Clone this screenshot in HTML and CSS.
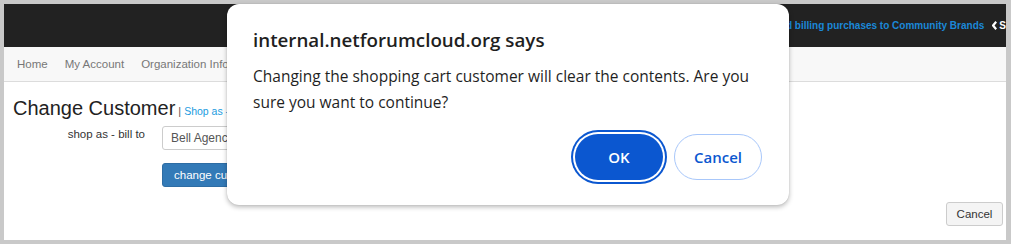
FILE: index.html
```html
<!DOCTYPE html>
<html lang="en">
<head>
<meta charset="utf-8">
<title>Change Customer</title>
<link rel="stylesheet" href="styles.css">
</head>
<body>
<div class="frame">
  <header class="topbar">
    <div class="topbar-links">
      <a class="billing-link" href="#">Send billing purchases to Community Brands</a>
      <svg class="chevron" width="5" height="9" viewBox="0 0 5 9" aria-hidden="true"><path d="M4.2 0.8 L1.1 4.5 L4.2 8.2" fill="none" stroke="#fff" stroke-width="2.2"/></svg>
      <span class="signout">Sign Out</span>
    </div>
  </header>
  <nav class="navbar">
    <a class="nav-item" href="#">Home</a>
    <a class="nav-item" href="#">My Account</a>
    <a class="nav-item" href="#">Organization Info</a>
  </nav>
  <main class="content">
    <h1 class="page-title">Change Customer<span class="title-sep">|</span><a class="title-link" href="#">Shop as - bill to</a></h1>
    <div class="form-row first-row">
      <label class="form-label">shop as - bill to</label>
      <div class="select-box">Bell Agency</div>
    </div>
    <div class="form-row">
      <span class="form-label"></span>
      <button class="btn-primary" type="button">change customer</button>
    </div>
    <div class="actions">
      <button class="btn-default" type="button">Cancel</button>
    </div>
  </main>
</div>
<div class="dialog" role="alertdialog">
  <h2 class="dialog-title">internal.netforumcloud.org says</h2>
  <p class="dialog-text">Changing the shopping cart customer will clear the contents. Are you sure you want to continue?</p>
  <div class="dialog-buttons">
    <button class="dlg-btn dlg-ok" type="button">OK</button>
    <button class="dlg-btn dlg-cancel" type="button">Cancel</button>
  </div>
</div>
</body>
</html>
```
FILE: styles.css
```css
html, body {
  margin: 0;
  padding: 0;
  height: 100%;
}
body {
  background: #c9c9c9;
  padding: 4px 5px 4px 4px;
  box-sizing: border-box;
  font-family: "Liberation Sans", Arial, sans-serif;
  color: #333;
  overflow: hidden;
}
.frame {
  background: #fff;
  height: 236px;
  display: flex;
  flex-direction: column;
  overflow: hidden;
}
.topbar {
  height: 43px;
  background: #222;
  display: flex;
  justify-content: flex-end;
  align-items: center;
  overflow: hidden;
  flex: none;
}
.topbar-links {
  display: flex;
  align-items: center;
  white-space: nowrap;
  margin-right: -35px;
}
.billing-link {
  color: #1b88d8;
  font-weight: bold;
  font-size: 10px;
  text-decoration: none;
}
.chevron {
  display: block;
  margin-left: 8px;
}
.signout {
  color: #fff;
  font-weight: bold;
  font-size: 10px;
  margin-left: 2px;
}
.navbar {
  height: 34px;
  background: #f8f8f8;
  border-bottom: 1px solid #dcdcdc;
  display: flex;
  align-items: center;
  padding-left: 13px;
  gap: 17px;
  flex: none;
}
.nav-item {
  color: #777;
  font-size: 11.5px;
  text-decoration: none;
}
.content {
  flex: 1;
  display: flex;
  flex-direction: column;
  padding: 15px 3px 14px 9px;
}
.page-title {
  margin: 0;
  font-size: 20px;
  font-weight: normal;
  line-height: 22px;
  color: #222;
}
.title-sep {
  font-size: 11px;
  color: #555;
  margin-left: 3px;
}
.title-link {
  font-size: 10.5px;
  color: #1a9be0;
  text-decoration: none;
  margin-left: 3px;
}
.form-row {
  display: flex;
  align-items: flex-start;
  gap: 17px;
}
.first-row {
  margin-top: 4px;
}
.form-row + .form-row {
  margin-top: 13px;
}
.form-label {
  width: 132px;
  text-align: right;
  font-size: 11.5px;
  line-height: 16px;
  color: #333;
  flex: none;
}
.select-box {
  width: 260px;
  height: 24px;
  box-sizing: border-box;
  border: 1px solid #ccc;
  border-radius: 3px;
  padding: 0 8px;
  font-size: 12px;
  line-height: 22px;
  color: #555;
}
.btn-primary {
  height: 24px;
  padding: 0 11px;
  background: #337ab7;
  border: 1px solid #2e6da4;
  border-radius: 3px;
  color: #fff;
  font-family: "Liberation Sans", Arial, sans-serif;
  font-size: 11.5px;
}
.actions {
  margin-top: auto;
  display: flex;
  justify-content: flex-end;
}
.btn-default {
  width: 57px;
  height: 24px;
  background: #f4f4f4;
  border: 1px solid #ccc;
  border-radius: 3px;
  color: #333;
  font-family: "Liberation Sans", Arial, sans-serif;
  font-size: 11.5px;
  padding: 0;
}
.dialog {
  position: absolute;
  top: 4px;
  left: 227px;
  width: 562px;
  height: 201px;
  box-sizing: border-box;
  background: #fff;
  border-radius: 12px;
  box-shadow: 0 2px 5px rgba(0, 0, 0, 0.28), 0 0 1px rgba(0, 0, 0, 0.2);
  padding: 24px 27px 25px 26px;
  font-family: "Open Sans", "Noto Sans", sans-serif;
  color: #1f1f1f;
  display: flex;
  flex-direction: column;
}
.dialog-title {
  margin: 0;
  font-size: 18.75px;
  font-weight: 600;
  line-height: 24px;
}
.dialog-text {
  margin: 11px 0 0;
  font-size: 15.5px;
  line-height: 26px;
}
.dialog-buttons {
  margin-top: auto;
  display: flex;
  justify-content: flex-end;
  gap: 11px;
}
.dlg-btn {
  min-width: 88px;
  height: 46px;
  border-radius: 23px;
  padding: 0 16px;
  font-family: "Open Sans", "Noto Sans", sans-serif;
  font-size: 15px;
  font-weight: 600;
}
.dlg-ok {
  background: #0b57d0;
  color: #fff;
  border: none;
  box-shadow: 0 0 0 2px #fff, 0 0 0 4px #0b57d0;
}
.dlg-cancel {
  background: #fff;
  color: #0b57d0;
  border: 1px solid #a8c7fa;
}
```
